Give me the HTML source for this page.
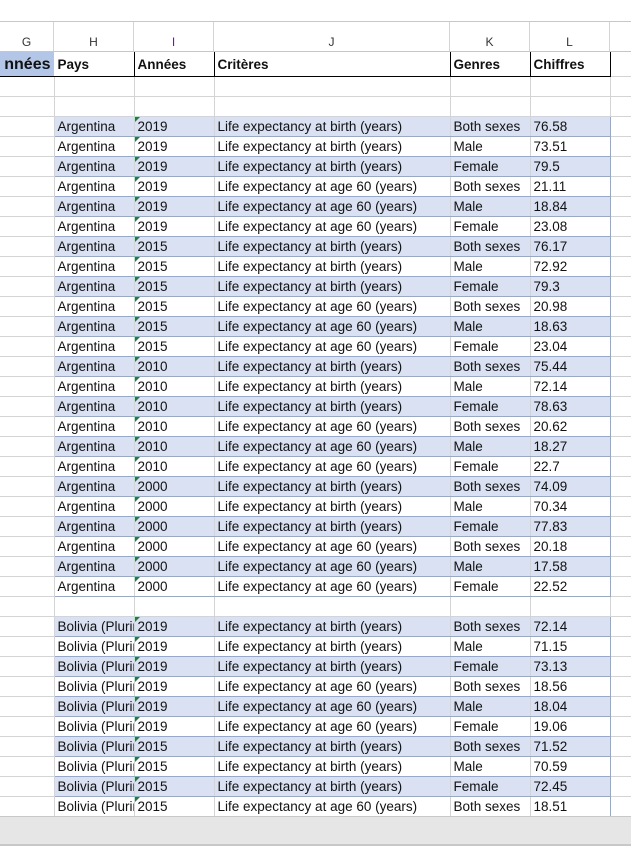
<!DOCTYPE html><html><head><style>
body{margin:0;width:631px;height:845px;overflow:hidden;background:#fff;font-family:"Liberation Sans",sans-serif;position:relative}
#top{position:absolute;left:0;top:0;width:631px;height:21px;background:#fff;border-bottom:1px solid #c8c8c8}
#ch{position:absolute;left:0;top:22px;width:631px;height:29px;background:#fff;border-bottom:1px solid #c6c6c6}
#ch div{position:absolute;top:0;height:29px;border-right:1px solid #d4d4d4;text-align:center;font-size:12px;line-height:40px;color:#333}
table{position:absolute;left:0;top:52px;border-collapse:collapse;table-layout:fixed;width:650px}
td{height:19px;padding:0 0 0 3px;border-right:1px solid #d4d4d4;border-bottom:1px solid #d4d4d4;font-size:13.5px;color:#111;white-space:nowrap;overflow:hidden;line-height:19px;position:relative}
tr.h td{height:22px;padding-top:2px;line-height:22px;font-weight:bold;border-bottom:1px solid #000;border-right:1px solid #000;font-size:13.5px}
tr.h td.g{background:#b4c6e7;font-size:16px;text-align:right;padding-right:3px;border-right:1px solid #fff}
tr.b td.d{background:#d9e1f2}
tr.b td.d,tr.w td.d{border-bottom:1px solid #8ea9db}
td.d.f{border-left:1px solid #8ea9db}
td.d.l{border-right:1px solid #8ea9db}
td.y::before{content:"";position:absolute;left:0;top:0;border-top:5px solid #1e7f3c;border-right:5px solid transparent}
#bot{position:absolute;left:0;top:816px;width:631px;height:27px;background:#e6e6e6;border-top:1px solid #c8c8c8;border-bottom:2px solid #c8c8c8}
</style></head><body>
<div id="top"></div>
<div id="ch"><div style="left:0;width:53px">G</div><div style="left:54px;width:79px">H</div><div style="left:134px;width:79px;color:#5a2b6e">I</div><div style="left:214px;width:235px">J</div><div style="left:450px;width:79px">K</div><div style="left:530px;width:79px">L</div></div>
<table id="t"><colgroup><col style="width:54px"><col style="width:80px"><col style="width:80px"><col style="width:236px"><col style="width:80px"><col style="width:80px"><col style="width:40px"></colgroup>
<tr class="h"><td class="g">nnées</td><td>Pays</td><td>Années</td><td>Critères</td><td>Genres</td><td>Chiffres</td><td style="border:none;border-bottom:1px solid #d4d4d4;font-weight:normal"></td></tr>
</table>
<div id="bot"></div>
<script>
var t=document.getElementById('t');
function blank(){var r=t.insertRow();for(var i=0;i<7;i++)r.insertCell();}
function row(c,y,cr,g,v,cls){var r=t.insertRow();r.className=cls;var a=['',c,y,cr,g,v,''];for(var i=0;i<7;i++){var d=r.insertCell();d.textContent=a[i];if(i>=1&&i<=5)d.className='d'+(i==1?' f':'')+(i==5?' l':'')+(i==2?' y':'');}}
var n=0;
function country(c,data){data.forEach(function(yd){var y=yd[0],v=yd[1];var crs=['Life expectancy at birth (years)','Life expectancy at birth (years)','Life expectancy at birth (years)','Life expectancy at age 60 (years)','Life expectancy at age 60 (years)','Life expectancy at age 60 (years)'];var gs=['Both sexes','Male','Female','Both sexes','Male','Female'];for(var i=0;i<v.length;i++){row(c,y,crs[i],gs[i],v[i],n%2==0?'b':'w');n++;}});}
blank();blank();
country('Argentina',[['2019',['76.58','73.51','79.5','21.11','18.84','23.08']],['2015',['76.17','72.92','79.3','20.98','18.63','23.04']],['2010',['75.44','72.14','78.63','20.62','18.27','22.7']],['2000',['74.09','70.34','77.83','20.18','17.58','22.52']]]);
blank();n=0;
country('Bolivia (Plurinational State of)',[['2019',['72.14','71.15','73.13','18.56','18.04','19.06']],['2015',['71.52','70.59','72.45','18.51']]]);
</script>
</body></html>
